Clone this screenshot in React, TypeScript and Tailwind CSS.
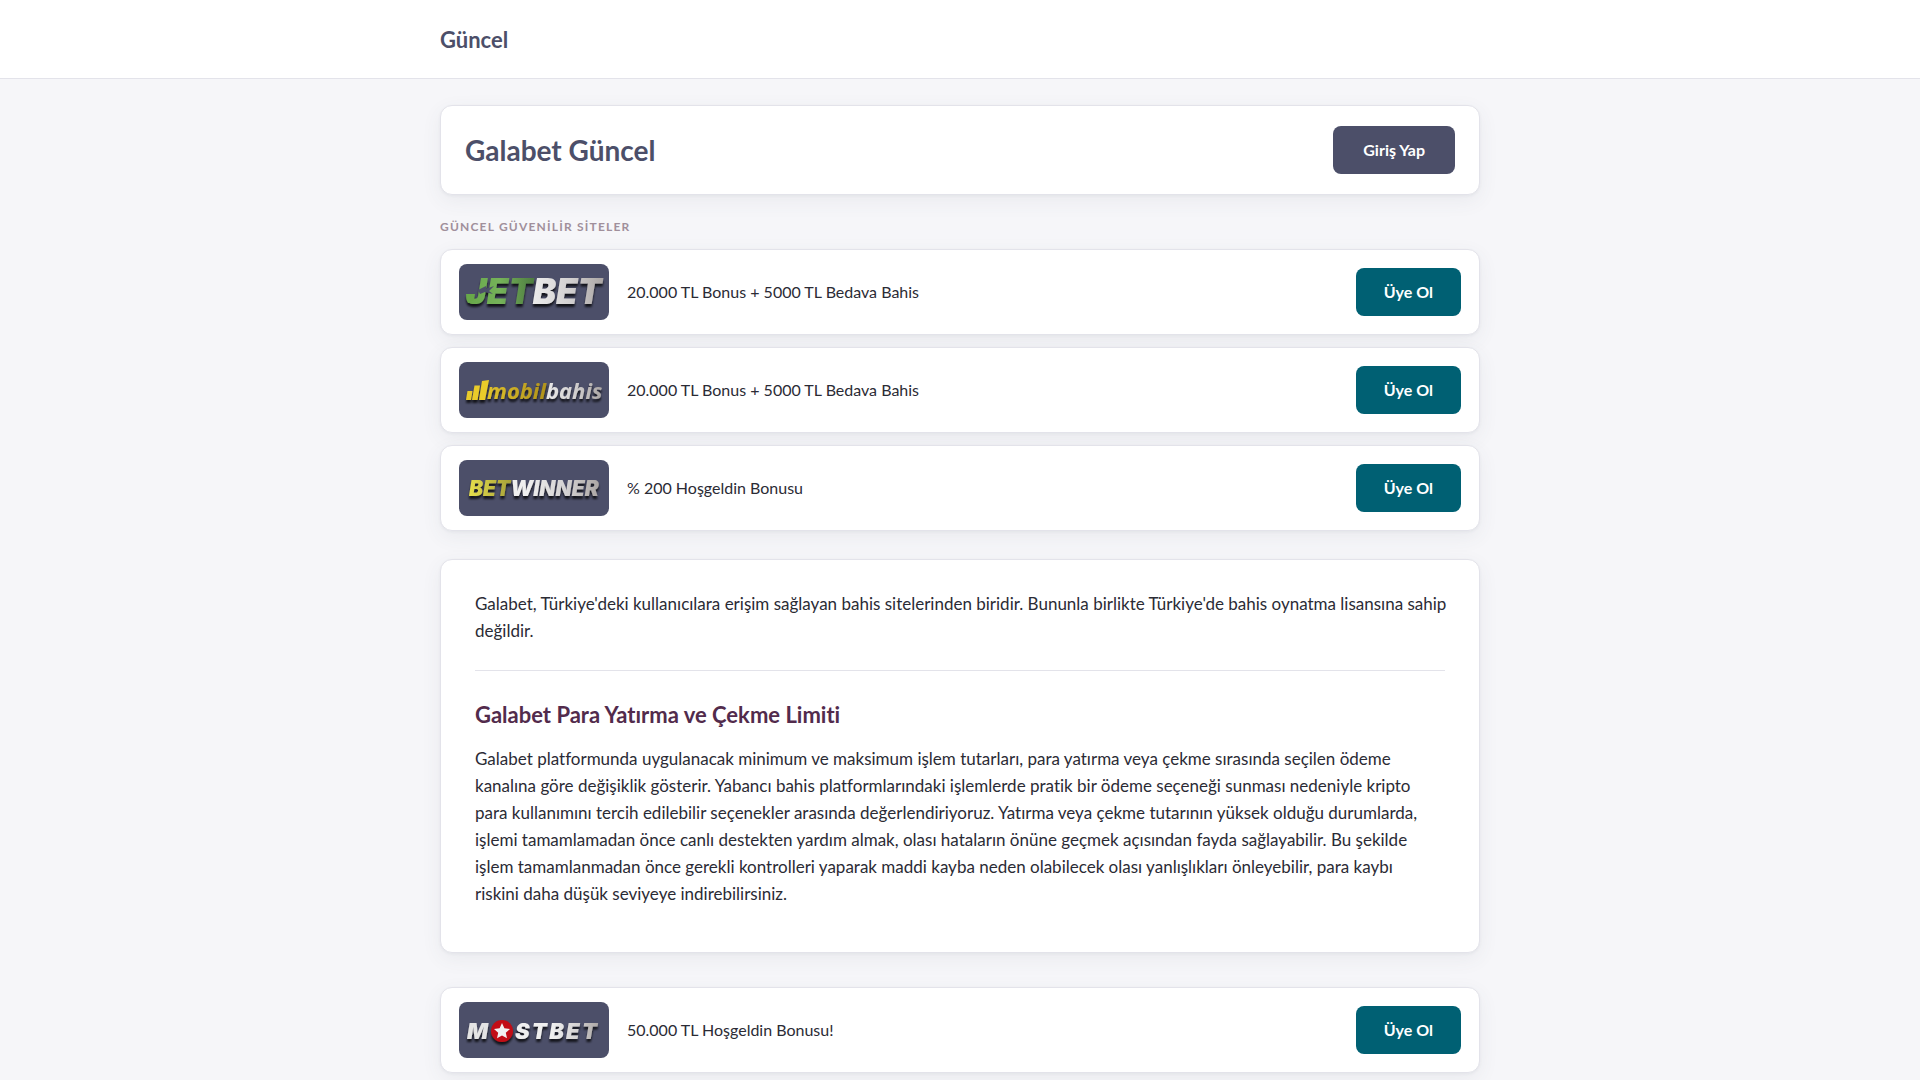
import type { ReactNode } from "react";

function LogoBox({ id, label, children }: { id: string; label: string; children: ReactNode }) {
  return (
    <svg viewBox="0 0 150 56" role="img" aria-label={label} className="h-14 w-[150px] shrink-0 rounded-lg bg-[#4c4f69]">
      <defs>
        <linearGradient id={`${id}-green`} x1="0" y1="0" x2="1" y2="0">
          <stop offset="0" stopColor="#68a84a" />
          <stop offset="0.25" stopColor="#75b25a" />
          <stop offset="0.5" stopColor="#4d7b40" />
        </linearGradient>
        <linearGradient id={`${id}-gold`} x1="0" y1="0" x2="1" y2="0">
          <stop offset="0" stopColor="#e0c22c" />
          <stop offset="0.5" stopColor="#b2941c" />
        </linearGradient>
        <linearGradient id={`${id}-lime`} x1="0" y1="0" x2="1" y2="0">
          <stop offset="0" stopColor="#e6df4c" />
          <stop offset="0.33" stopColor="#a59f38" />
        </linearGradient>
        <linearGradient id={`${id}-silver`} x1="0" y1="0" x2="1" y2="0">
          <stop offset="0.45" stopColor="#efefef" />
          <stop offset="0.75" stopColor="#d3d1d1" />
          <stop offset="1" stopColor="#aaa5a3" />
        </linearGradient>
        <filter id={`${id}-shadow`} x="-10%" y="-20%" width="120%" height="160%">
          <feDropShadow dx="0" dy="3" stdDeviation="1.2" floodColor="#000000" floodOpacity="0.75" />
        </filter>
      </defs>
      <g filter={`url(#${id}-shadow)`}>{children}</g>
    </svg>
  );
}

function JetbetLogo() {
  return (
    <LogoBox id="jetbet" label="Jetbet">
      <text x="7" y="40" className="font-['Inter'] text-[35px] font-black italic">
        <tspan fill="url(#jetbet-green)">JET</tspan>
        <tspan fill="url(#jetbet-silver)">BET</tspan>
      </text>
      <path d="M7 30 L16 30 L15 36 L9 39 Z" fill="#68a84a" />
      <path d="M19 26 L27 22 L27 25 L35 22 L30 27 L34 30 L26 28 L21 30 Z" fill="#4c4f69" />
    </LogoBox>
  );
}

function MobilbahisLogo() {
  return (
    <LogoBox id="mobilbahis" label="Mobilbahis">
      <g fill="#e9cb2c">
        <path d="M8.500 29 h5 l-1.500 9 h-5 z" />
        <path d="M15.500 23.500 h5.500 l-2.500 14.500 h-5.500 z" />
        <path d="M23 19 l7 -1 l-4 20 h-6 z" />
      </g>
      <text x="28" y="37" className="font-['Open_Sans'] text-[22px] font-bold italic">
        <tspan fill="url(#mobilbahis-gold)">mobil</tspan>
        <tspan fill="url(#mobilbahis-silver)">bahis</tspan>
      </text>
    </LogoBox>
  );
}

function BetwinnerLogo() {
  return (
    <LogoBox id="betwinner" label="Betwinner">
      <text x="10" y="36" className="font-['Inter'] text-[21px] font-black italic">
        <tspan fill="url(#betwinner-lime)">BET</tspan>
        <tspan fill="url(#betwinner-silver)">WINNER</tspan>
      </text>
    </LogoBox>
  );
}

function MostbetLogo() {
  return (
    <LogoBox id="mostbet" label="Mostbet">
      <text x="8" y="37" fill="#e4e4e4" className="font-['Inter'] text-[22px] font-black italic">M</text>
      <circle cx="43" cy="29" r="11" fill="#c20c14" />
      <path d="M43 21 L45.400 26.300 L51 26.900 L46.800 30.700 L48 36.300 L43 33.400 L38 36.300 L39.200 30.700 L35 26.900 L40.600 26.300 Z" fill="#f1f1f1" />
      <text x="56" y="37" fill="url(#mostbet-silver)" className="font-['Inter'] text-[22px] font-black italic tracking-widest">STBET</text>
    </LogoBox>
  );
}

const card = "rounded-xl border border-[#e3e3ea] bg-white shadow-[0_1px_3px_rgba(76,79,105,0.06),0_6px_20px_rgba(76,79,105,0.07)]";

function OfferRow({ logo, text }: { logo: ReactNode; text: string }) {
  return (
    <li className={`flex items-center gap-[18px] px-[18px] py-[14px] ${card}`}>
      {logo}
      <p className="min-w-0 flex-1 text-base">{text}</p>
      <a href="#uye-ol" className="flex h-12 items-center rounded-lg bg-[#006073] px-7 text-base font-bold text-white">
        Üye Ol
      </a>
    </li>
  );
}

function Lines({ lines }: { lines: string[] }) {
  return (
    <p className="text-[17px] leading-[27px]">
      {lines.map((line) => (
        <span key={line} className="lg:block lg:whitespace-nowrap">{line} </span>
      ))}
    </p>
  );
}

export default function App() {
  return (
    <div className="min-h-screen bg-[#f6f6f9] font-['Lato',sans-serif] text-[#2b2b35] [font-variant-ligatures:none]">
      <header className="border-b border-[#e3e3ea] bg-white">
        <div className="mx-auto flex h-[78px] max-w-[1040px] items-center">
          <a href="#" className="text-[22px] font-bold text-[#4c4f69]">Güncel</a>
        </div>
      </header>

      <main className="mx-auto max-w-[1040px] pt-[26px] pb-3">
        <section className={`flex items-center justify-between px-6 py-5 ${card}`}>
          <h1 className="text-[28px] leading-9 font-bold text-[#4c4f69]">Galabet Güncel</h1>
          <a href="#giris" className="flex h-12 items-center rounded-lg bg-[#4c4f69] px-[30px] text-base font-bold text-white">
            Giriş Yap
          </a>
        </section>

        <h2 className="mt-6 text-xs leading-4 font-bold tracking-widest text-[#a08f9b]">GÜNCEL GÜVENİLİR SİTELER</h2>

        <ul className="mt-[14px] grid gap-3">
          <OfferRow logo={<JetbetLogo />} text="20.000 TL Bonus + 5000 TL Bedava Bahis" />
          <OfferRow logo={<MobilbahisLogo />} text="20.000 TL Bonus + 5000 TL Bedava Bahis" />
          <OfferRow logo={<BetwinnerLogo />} text="% 200 Hoşgeldin Bonusu" />
        </ul>

        <article className={`mt-7 px-[34px] pt-[30px] pb-[45px] ${card}`}>
          <Lines
            lines={[
              "Galabet, Türkiye'deki kullanıcılara erişim sağlayan bahis sitelerinden biridir. Bununla birlikte Türkiye'de bahis oynatma lisansına sahip",
              "değildir.",
            ]}
          />
          <hr className="my-[26px] border-[#e3e3ea]" />
          <h2 className="mb-3 text-[22px] leading-9 font-bold text-[#522b4c]">Galabet Para Yatırma ve Çekme Limiti</h2>
          <Lines
            lines={[
              "Galabet platformunda uygulanacak minimum ve maksimum işlem tutarları, para yatırma veya çekme sırasında seçilen ödeme",
              "kanalına göre değişiklik gösterir. Yabancı bahis platformlarındaki işlemlerde pratik bir ödeme seçeneği sunması nedeniyle kripto",
              "para kullanımını tercih edilebilir seçenekler arasında değerlendiriyoruz. Yatırma veya çekme tutarının yüksek olduğu durumlarda,",
              "işlemi tamamlamadan önce canlı destekten yardım almak, olası hataların önüne geçmek açısından fayda sağlayabilir. Bu şekilde",
              "işlem tamamlanmadan önce gerekli kontrolleri yaparak maddi kayba neden olabilecek olası yanlışlıkları önleyebilir, para kaybı",
              "riskini daha düşük seviyeye indirebilirsiniz.",
            ]}
          />
        </article>

        <ul className="mt-[34px] grid gap-3">
          <OfferRow logo={<MostbetLogo />} text="50.000 TL Hoşgeldin Bonusu!" />
        </ul>
      </main>
    </div>
  );
}
